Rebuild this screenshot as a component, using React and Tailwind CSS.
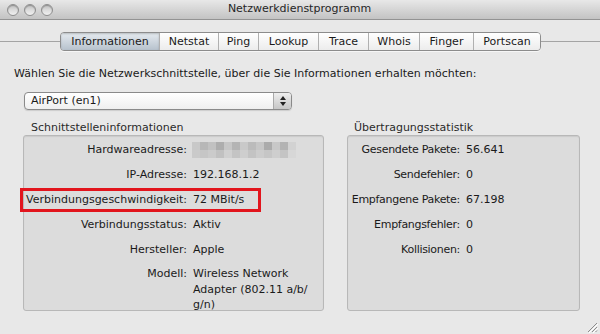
import React from 'react';

const FONT = { fontFamily: '"DejaVu Sans", "Liberation Sans", sans-serif' };

const tabs = [
  { label: 'Informationen', width: 'w-[98px]', active: true },
  { label: 'Netstat', width: 'w-[59px]' },
  { label: 'Ping', width: 'w-[40px]' },
  { label: 'Lookup', width: 'w-[60px]' },
  { label: 'Trace', width: 'w-[50px]' },
  { label: 'Whois', width: 'w-[51px]' },
  { label: 'Finger', width: 'w-[54px]' },
  { label: 'Portscan', width: 'w-[67px]' },
];

const mosaicTop = ['#c8c8c8', '#b7b7b7', '#c1c1c1', '#adadad', '#c6c6c6', '#b4b4b4', '#c9c9c9', '#bbbbbb', '#c6c6c6', '#ababab', '#c8c8c8', '#b3b3b3', '#d2d2d2'];
const mosaicBottom = ['#cacaca', '#c6c6c6', '#cbcbcb', '#c1c1c1', '#d0d0d0', '#c4c4c4', '#cecece', '#c3c3c3', '#cccccc', '#c6c6c6', '#cecece', '#c4c4c4', '#d7d7d7'];

const TrafficLight = () => (
  <span className="w-[12px] h-[12px] rounded-full border border-[#8e8e8e] bg-gradient-to-b from-[#bdbdbd] via-[#dcdcdc] to-[#f0f0f0] shadow-[inset_0_1px_1px_rgba(0,0,0,0.25)]"></span>
);

const Row = ({ label, labelClass, valueGap, children }) => (
  <div className="flex items-start">
    <span className={`${labelClass} shrink-0 text-right leading-[15.5px] whitespace-nowrap`}>{label}</span>
    <span className={`${valueGap} leading-[15.5px] whitespace-nowrap`}>{children}</span>
  </div>
);

const HardwareMosaic = () => (
  <span className="flex flex-col h-[15.5px] justify-center">
    <span className="flex">
      {mosaicTop.map((c, i) => (
        <span key={i} className="w-[8px] h-[8px]" style={{ backgroundColor: c }}></span>
      ))}
    </span>
    <span className="flex">
      {mosaicBottom.map((c, i) => (
        <span key={i} className="w-[8px] h-[8px]" style={{ backgroundColor: c }}></span>
      ))}
    </span>
  </span>
);

export default function App() {
  const left = 'w-[163px]';
  const right = 'w-[112px] tracking-[-0.3px]';

  return (
    <div className="w-[600px] h-[334px] bg-[#e8e8e8] flex flex-col overflow-hidden text-[11px] text-[#1a1a1a]" style={FONT}>
      {/* title bar */}
      <div className="h-[20px] shrink-0 flex items-center bg-gradient-to-b from-[#e8e8e8] to-[#c3c3c3] border-b border-[#939393]">
        <div className="flex items-center gap-[5px] pl-[7px]">
          <TrafficLight />
          <TrafficLight />
          <TrafficLight />
        </div>
        <div className="flex-1 text-center text-[11px] text-[#262626] pr-[50px] -ml-[4px]">Netzwerkdienstprogramm</div>
      </div>

      {/* tabs */}
      <div className="mt-[12px] h-[19px] flex items-center shrink-0">
        <div className="w-[60px] h-px bg-[#a4a4a4]"></div>
        <div className="flex h-[19px] border border-[#8c8c8c] rounded-[4px] overflow-hidden shadow-[0_1px_0_rgba(255,255,255,0.6)]">
          {tabs.map((t, i) => (
            <div
              key={t.label}
              className={`${t.width} flex items-center justify-center leading-none text-[11px] ${i > 0 ? 'border-l border-[#b0b0b0]' : ''} ${
                t.active
                  ? 'bg-gradient-to-b from-[#e6ebf0] to-[#b7c2cd] shadow-[inset_0_1px_2px_rgba(0,0,0,0.2)]'
                  : 'bg-gradient-to-b from-[#ffffff] to-[#ececec]'
              }`}
            >
              {t.label}
            </div>
          ))}
        </div>
        <div className="flex-1 h-px bg-[#a4a4a4]"></div>
      </div>

      <p className="mt-[16px] ml-[14px] leading-[14px] whitespace-nowrap">
        Wählen Sie die Netzwerkschnittstelle, über die Sie Informationen erhalten möchten:
      </p>

      {/* popup */}
      <div className="mt-[11px] ml-[24px] w-[268px] h-[18px] flex border border-[#8a8a8a] rounded-[4px] overflow-hidden bg-gradient-to-b from-[#ffffff] to-[#efefef] shadow-[0_1px_1px_rgba(0,0,0,0.12)]">
        <span className="flex-1 pl-[6px] leading-[16px]">AirPort (en1)</span>
        <span className="w-[18px] flex flex-col items-center justify-center gap-[2px] border-l border-[#a9a9a9] bg-gradient-to-b from-[#eeeeee] to-[#c6c6c6]">
          <svg width="6" height="4" viewBox="0 0 6 4"><path d="M3 0 L6 4 L0 4 Z" fill="#222" /></svg>
          <svg width="6" height="4" viewBox="0 0 6 4"><path d="M0 0 L6 0 L3 4 Z" fill="#222" /></svg>
        </span>
      </div>

      {/* groups */}
      <div className="mt-[11px] pl-[23px] flex gap-[23px]">
        <div className="w-[301px] flex flex-col">
          <div className="pl-[8px] h-[14px] leading-[14px] text-[#2a2a2a]">Schnittstelleninformationen</div>
          <div className="h-[176px] border border-[#b8b8b8] rounded-[3px] bg-[#dcdcdc] shadow-[inset_0_1px_1px_rgba(0,0,0,0.08)] pt-[6px] flex flex-col gap-[9.4px]">
            <Row label="Hardwareadresse:" labelClass={left} valueGap="pl-[5px]">
              <HardwareMosaic />
            </Row>
            <Row label="IP-Adresse:" labelClass={left} valueGap="pl-[6px]">192.168.1.2</Row>
            <div className="relative">
              <Row label="Verbindungsgeschwindigkeit:" labelClass={left} valueGap="pl-[6px]">72 MBit/s</Row>
              <span className="absolute -left-[4px] -top-[4px] w-[241px] h-[24px] border-[3px] border-[#e2151d]"></span>
            </div>
            <Row label="Verbindungsstatus:" labelClass={left} valueGap="pl-[6px]">Aktiv</Row>
            <Row label="Hersteller:" labelClass={left} valueGap="pl-[6px]">Apple</Row>
            <Row label="Modell:" labelClass={left} valueGap="pl-[6px]">
              Wireless Network
              <br />
              Adapter (802.11 a/b/
              <br />
              g/n)
            </Row>
          </div>
        </div>

        <div className="w-[233px] flex flex-col">
          <div className="pl-[7px] h-[14px] leading-[14px] text-[#2a2a2a]">Übertragungsstatistik</div>
          <div className="h-[176px] border border-[#b8b8b8] rounded-[3px] bg-[#dcdcdc] shadow-[inset_0_1px_1px_rgba(0,0,0,0.08)] pt-[6px] flex flex-col gap-[9.4px]">
            <Row label="Gesendete Pakete:" labelClass={right} valueGap="pl-[6px]">56.641</Row>
            <Row label="Sendefehler:" labelClass={right} valueGap="pl-[6px]">0</Row>
            <Row label="Empfangene Pakete:" labelClass={right} valueGap="pl-[6px]">67.198</Row>
            <Row label="Empfangsfehler:" labelClass={right} valueGap="pl-[6px]">0</Row>
            <Row label="Kollisionen:" labelClass={right} valueGap="pl-[6px]">0</Row>
          </div>
        </div>
      </div>

      {/* resize grip */}
      <div className="mt-auto flex justify-end pr-[2px] pb-[1px]">
        <svg width="12" height="12" viewBox="0 0 12 12">
          <path d="M11 2 L2 11 M11 6 L6 11 M11 9.5 L9.5 11" stroke="#8c8c8c" strokeWidth="1" />
          <path d="M12 3 L3 12 M12 7 L7 12" stroke="#ffffff" strokeWidth="1" />
        </svg>
      </div>
    </div>
  );
}
